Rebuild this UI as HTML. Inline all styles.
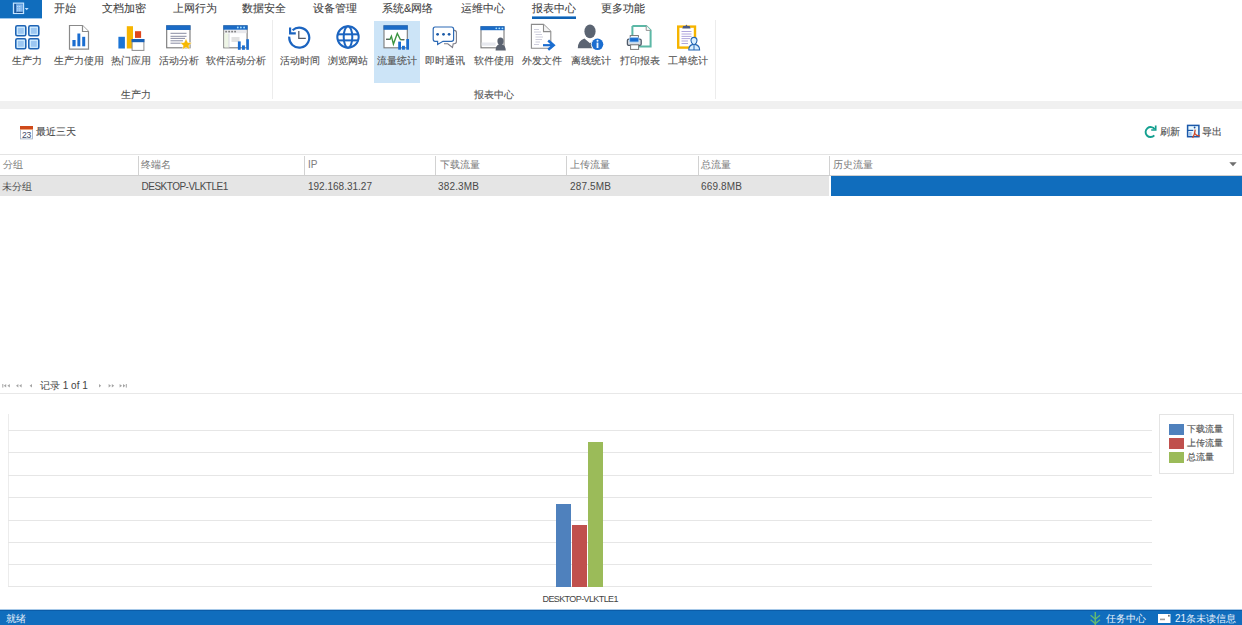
<!DOCTYPE html>
<html><head><meta charset="utf-8">
<style>
*{margin:0;padding:0;box-sizing:border-box}
html,body{width:1242px;height:625px;overflow:hidden;background:#fff;font-family:"Liberation Sans",sans-serif;color:#444}
.a{position:absolute;white-space:nowrap}
.tab{position:absolute;top:0;font-size:11px;line-height:17px;color:#444;-webkit-text-stroke:0.1px #444}
.lbl{position:absolute;top:52.5px;font-size:10px;line-height:16px;color:#555;-webkit-text-stroke:0.12px #555;text-align:center;width:80px;margin-left:-40px}
.ico{position:absolute;top:25px;width:26px;height:26px;margin-left:-13px}
.hd{position:absolute;top:156px;font-size:10px;line-height:17px;color:#808080;-webkit-text-stroke:0.05px #808080}
.cell{position:absolute;top:177px;font-size:10px;line-height:17px;color:#4a4a4a;letter-spacing:0.15px}
.vd{position:absolute;top:156px;width:1px;height:19px;background:#d2d2d2}
.gl{position:absolute;left:8px;width:1144px;height:1px;background:#e6e6e6}
</style></head><body>

<!-- file button -->
<div class="a" style="left:0;top:0;width:42px;height:18px;background:#106dbd"></div><div class="a" style="left:0;top:18px;width:42px;height:1px;background:#9cc6ec"></div>

<!-- tabs -->
<div class="tab" style="left:54px">开始</div>
<div class="tab" style="left:102px">文档加密</div>
<div class="tab" style="left:173px">上网行为</div>
<div class="tab" style="left:242px">数据安全</div>
<div class="tab" style="left:313px">设备管理</div>
<div class="tab" style="left:382px">系统&amp;网络</div>
<div class="tab" style="left:461px">运维中心</div>
<div class="tab" style="left:532px">报表中心</div>
<div class="tab" style="left:601px">更多功能</div>
<div class="a" style="left:532px;top:16px;width:44px;height:3px;background:linear-gradient(#6aa4dc 0,#6aa4dc 1px,#0f62b4 1px)"></div>

<!-- ribbon -->
<div class="a" style="left:374px;top:21px;width:46px;height:62px;background:#cce4f7"></div>
<div class="a" style="left:272px;top:20px;width:1px;height:79px;background:#ececec"></div>
<div class="a" style="left:715px;top:20px;width:1px;height:79px;background:#ececec"></div>

<div class="lbl" style="left:27px">生产力</div>
<div class="lbl" style="left:79px">生产力使用</div>
<div class="lbl" style="left:130.5px">热门应用</div>
<div class="lbl" style="left:179px">活动分析</div>
<div class="lbl" style="left:236px">软件活动分析</div>
<div class="lbl" style="left:299.5px">活动时间</div>
<div class="lbl" style="left:348px">浏览网站</div>
<div class="lbl" style="left:396.5px">流量统计</div>
<div class="lbl" style="left:445px">即时通讯</div>
<div class="lbl" style="left:493.5px">软件使用</div>
<div class="lbl" style="left:542px">外发文件</div>
<div class="lbl" style="left:590.5px">离线统计</div>
<div class="lbl" style="left:639.5px">打印报表</div>
<div class="lbl" style="left:687.5px">工单统计</div>

<div class="lbl" style="left:135.5px;top:87px">生产力</div>
<div class="lbl" style="left:493.5px;top:87px">报表中心</div>

<div class="a" style="left:0;top:101px;width:1242px;height:8px;background:#f0f0f0"></div>

<!-- toolbar -->
<div class="a" style="left:36px;top:124px;font-size:10px;line-height:16px;color:#4a4a4a;-webkit-text-stroke:0.1px #4a4a4a">最近三天</div>
<div class="a" style="left:1160px;top:124px;font-size:10px;line-height:16px;color:#4a4a4a;-webkit-text-stroke:0.1px #4a4a4a">刷新</div>
<div class="a" style="left:1202px;top:124px;font-size:10px;line-height:16px;color:#4a4a4a;-webkit-text-stroke:0.1px #4a4a4a">导出</div>

<!-- table -->
<div class="a" style="left:0;top:154px;width:1242px;height:1px;background:#e4e4e4"></div>
<div class="a" style="left:0;top:175px;width:1242px;height:1px;background:#cfcfcf"></div>
<div class="a" style="left:0;top:176px;width:829px;height:20px;background:#e5e5e5"></div>
<div class="a" style="left:831px;top:176px;width:411px;height:20px;background:#106dbd"></div>
<div class="vd" style="left:138px"></div>
<div class="vd" style="left:304px"></div>
<div class="vd" style="left:435px"></div>
<div class="vd" style="left:566px"></div>
<div class="vd" style="left:698px"></div>
<div class="vd" style="left:829px"></div>
<div class="hd" style="left:3px">分组</div>
<div class="hd" style="left:141px">终端名</div>
<div class="hd" style="left:308px">IP</div>
<div class="hd" style="left:439.5px">下载流量</div>
<div class="hd" style="left:570px">上传流量</div>
<div class="hd" style="left:701px">总流量</div>
<div class="hd" style="left:833px">历史流量</div>
<div class="cell" style="top:177.7px;left:2px">未分组</div>
<div class="cell" style="top:177.7px;left:141.5px;letter-spacing:-0.5px">DESKTOP-VLKTLE1</div>
<div class="cell" style="top:177.7px;left:308px;letter-spacing:0">192.168.31.27</div>
<div class="cell" style="top:177.7px;left:438px">382.3MB</div>
<div class="cell" style="top:177.7px;left:570px">287.5MB</div>
<div class="cell" style="top:177.7px;left:701px">669.8MB</div>

<!-- pager -->
<div class="a" style="left:40px;top:378px;font-size:10px;line-height:15px;color:#444">记录 1 of 1</div>
<div class="a" style="left:0;top:393px;width:1242px;height:1px;background:#e8e8e8"></div>

<!-- chart -->
<div class="a" style="left:8px;top:414px;width:1px;height:173px;background:#ececec"></div>
<div class="gl" style="top:430px"></div>
<div class="gl" style="top:452px"></div>
<div class="gl" style="top:475px"></div>
<div class="gl" style="top:497px"></div>
<div class="gl" style="top:520px"></div>
<div class="gl" style="top:542px"></div>
<div class="gl" style="top:564px"></div>
<div class="gl" style="top:586px"></div>
<div class="a" style="left:556px;top:504px;width:15px;height:83px;background:#4f81bd"></div>
<div class="a" style="left:572px;top:525px;width:15px;height:62px;background:#c0504d"></div>
<div class="a" style="left:588px;top:442px;width:15px;height:145px;background:#9bbb59"></div>
<div class="a" style="left:542.5px;top:593px;font-size:9px;line-height:13px;color:#444;letter-spacing:-0.6px">DESKTOP-VLKTLE1</div>

<!-- legend -->
<div class="a" style="left:1159px;top:414px;width:75px;height:60px;border:1px solid #e4e4e4"></div>
<div class="a" style="left:1169px;top:424px;width:15px;height:11px;background:#4f81bd"></div>
<div class="a" style="left:1169px;top:438px;width:15px;height:11px;background:#c0504d"></div>
<div class="a" style="left:1169px;top:452px;width:15px;height:11px;background:#9bbb59"></div>
<div class="a" style="left:1187px;top:422px;font-size:9px;line-height:14px;color:#555;-webkit-text-stroke:0.15px #555">下载流量<br>上传流量<br>总流量</div>

<!-- status bar -->
<div class="a" style="left:0;top:609px;width:1242px;height:1px;background:#a6c8e8"></div><div class="a" style="left:0;top:610px;width:1242px;height:15px;background:#106dbd;border-top:1px solid #0b5ca8"></div>
<div class="a" style="left:6px;top:612px;font-size:10px;line-height:14px;color:#eaf3fc">就绪</div>
<div class="a" style="left:1106px;top:612px;font-size:10px;line-height:14px;color:#eaf3fc">任务中心</div>
<div class="a" style="left:1175px;top:612px;font-size:10px;line-height:14px;color:#eaf3fc">21条未读信息</div>

<!-- file button icon -->
<svg class="a" style="left:0;top:0" width="42" height="18" viewBox="0 0 42 18">
<rect x="13.4" y="3.1" width="10.2" height="10.4" fill="#4d8fd6" stroke="#c8e6ff" stroke-width="1.1"/>
<rect x="14.6" y="4" width="1.1" height="9" fill="#0b3f80"/>
<rect x="16.4" y="4.6" width="6.2" height="7.6" fill="#7fb6ec"/>
<g fill="#c6e2ff"><rect x="17.2" y="6" width="1" height="1"/><rect x="19.2" y="6" width="1" height="1"/><rect x="17.2" y="8.4" width="1" height="1"/><rect x="19.2" y="8.4" width="1" height="1"/><rect x="17.2" y="10.4" width="1" height="1"/><rect x="19.2" y="10.4" width="1" height="1"/></g>
<rect x="16.4" y="11.8" width="6.2" height="1" fill="#0b3f80"/>
<path d="M24.7 7.9 H28.7 L26.7 10.3Z" fill="#c0e0ff"/>
</svg>

<!-- 1 生产力 -->
<svg class="a" style="left:14px;top:24px" width="27" height="27" viewBox="0 0 27 27">
<g fill="#9cc7f2" stroke="#1f64b4" stroke-width="1.6">
<rect x="1.8" y="1.8" width="10" height="10" rx="1.5"/>
<rect x="14.8" y="1.8" width="10" height="10" rx="1.5"/>
<rect x="1.8" y="14.8" width="10" height="10" rx="1.5"/>
<rect x="14.8" y="14.8" width="10" height="10" rx="1.5"/>
</g>
<g fill="none" stroke="#d8f0ff" stroke-width="1">
<rect x="3.3" y="3.3" width="7" height="7"/>
<rect x="16.3" y="3.3" width="7" height="7"/>
<rect x="3.3" y="16.3" width="7" height="7"/>
<rect x="16.3" y="16.3" width="7" height="7"/>
</g>
</svg>

<!-- 2 生产力使用 -->
<svg class="a" style="left:68px;top:24px" width="22" height="27" viewBox="0 0 22 27">
<path d="M1.5 1.5 H14.5 L20.5 7.5 V25.2 H1.5 Z" fill="#fff" stroke="#8a8a8a" stroke-width="1.2"/>
<path d="M14.5 1.5 V7.5 H20.5" fill="#fff" stroke="#8a8a8a" stroke-width="1.2"/>
<g fill="#1a6dd0">
<rect x="4.4" y="16" width="3.2" height="6.3"/>
<rect x="9.4" y="9.5" width="2.9" height="12.8"/>
<rect x="14.2" y="12.8" width="3" height="9.5"/>
</g>
</svg>

<!-- 3 热门应用 -->
<svg class="a" style="left:117px;top:25px" width="28" height="26" viewBox="0 0 28 26">
<rect x="1.4" y="11.8" width="6.5" height="11.7" fill="#1b74d6"/>
<rect x="9.8" y="1.2" width="6.2" height="22.3" fill="#f7b500"/>
<rect x="18" y="6.2" width="6.1" height="6.7" fill="#e0461c"/>
<rect x="15.1" y="14.5" width="11.8" height="10.9" fill="#fff" stroke="#8c8c8c" stroke-width="1"/>
<rect x="14.6" y="14" width="12.8" height="3.2" fill="#1862b8"/>
</svg>

<!-- 4 活动分析 -->
<svg class="a" style="left:165px;top:24px" width="28" height="28" viewBox="0 0 28 28">
<rect x="1.7" y="1.8" width="23.3" height="22" fill="#fff" stroke="#777" stroke-width="1.1"/>
<rect x="1.2" y="1.3" width="24.3" height="4.7" fill="#1b6bc6"/>
<g stroke="#7a7f99" stroke-width="0.9">
<line x1="5.5" y1="9.3" x2="21.5" y2="9.3"/>
<line x1="5.5" y1="12.3" x2="21.5" y2="12.3"/>
<line x1="5.5" y1="14.4" x2="20" y2="14.4"/>
<line x1="5.5" y1="16.8" x2="18" y2="16.8"/>
<line x1="5.5" y1="19.2" x2="17" y2="19.2"/>
</g>
<path d="M21 14.6 L22.8 18.4 L26.8 18.8 L23.8 21.6 L24.7 25.6 L21 23.4 L17.3 25.6 L18.2 21.6 L15.2 18.8 L19.2 18.4Z" fill="#f6b800" stroke="#fff" stroke-width="0.5"/>
</svg>

<!-- 5 软件活动分析 -->
<svg class="a" style="left:222px;top:24px" width="28" height="28" viewBox="0 0 28 28">
<rect x="1.8" y="1.8" width="23.3" height="22" fill="#fff" stroke="#7a7a7a" stroke-width="1.1"/>
<rect x="1.3" y="1.3" width="24.3" height="4.4" fill="#1b6bc6"/>
<circle cx="15.8" cy="3.5" r="0.9" fill="#a9e2ff"/>
<circle cx="18.9" cy="3.5" r="0.9" fill="#a9e2ff"/>
<circle cx="22.1" cy="3.5" r="0.9" fill="#a9e2ff"/>
<rect x="2.3" y="6.2" width="22.3" height="3" fill="#e8e8ec"/>
<g fill="#777">
<rect x="3.3" y="6.8" width="1.6" height="1.6"/><rect x="6.3" y="6.8" width="1.6" height="1.6"/><rect x="9.3" y="6.8" width="1.6" height="1.6"/><rect x="12.3" y="6.8" width="1.6" height="1.6"/>
</g>
<rect x="2.3" y="9.5" width="4.5" height="14" fill="#eef5e6"/>
<line x1="7" y1="9.5" x2="7" y2="23.5" stroke="#c9c9d6" stroke-width="0.8"/>
<rect x="9.5" y="13" width="8" height="5" fill="#e2e2e2"/>
<rect x="15.9" y="17.4" width="2.8" height="8.4" fill="#1a6dd0"/>
<rect x="20" y="21.4" width="2.9" height="4.4" fill="#1a6dd0"/>
<rect x="24.3" y="15.2" width="2.6" height="10.6" fill="#1a6dd0"/>
</svg>

<!-- 6 活动时间 -->
<svg class="a" style="left:287px;top:26px" width="26" height="25" viewBox="0 0 26 25">
<path d="M2.3 10.6 A10 10 0 1 0 5.6 4.2" fill="none" stroke="#1b64c0" stroke-width="2.2"/>
<path d="M3.1 1.4 V7.4 H8.8" fill="none" stroke="#1b64c0" stroke-width="2.2"/>
<path d="M11.8 5 V12.3 H18.8" fill="none" stroke="#555a66" stroke-width="1.3"/>
</svg>

<!-- 7 浏览网站 -->
<svg class="a" style="left:335px;top:24px" width="26" height="26" viewBox="0 0 26 26">
<g fill="none" stroke="#1b64c0" stroke-width="2">
<circle cx="13" cy="13" r="10.7"/>
<ellipse cx="13" cy="13" rx="4.3" ry="10.7"/>
<line x1="2.5" y1="10.3" x2="23.5" y2="10.3"/>
<line x1="2.5" y1="16.4" x2="23.5" y2="16.4"/>
</g>
</svg>

<!-- 8 流量统计 -->
<svg class="a" style="left:382px;top:24px" width="28" height="28" viewBox="0 0 28 28">
<rect x="2" y="1.8" width="23.3" height="22" fill="#fff" stroke="#7a7a7a" stroke-width="1.1"/>
<rect x="1.5" y="1.3" width="24.3" height="4.5" fill="#1b6bc6"/>
<path d="M4.1 15.3 H8 L9.4 12.2 L11.4 20.1 L15.3 9.4 L18.4 15.6 H22.3" fill="none" stroke="#3a9440" stroke-width="1.35"/><path d="M4.1 15.3 H7.2 M19.2 15.6 H22.3" stroke="#5a6060" stroke-width="1.35"/>
<rect x="16.2" y="17.6" width="2.8" height="8.1" fill="#1a6dd0"/>
<rect x="20" y="21.8" width="2.9" height="3.9" fill="#1a6dd0"/>
<rect x="24.3" y="15" width="2.7" height="10.7" fill="#1a6dd0"/>
</svg>

<!-- 9 即时通讯 -->
<svg class="a" style="left:431px;top:25px" width="28" height="25" viewBox="0 0 28 25">
<path d="M8 5.4 H23.2 Q25.4 5.4 25.4 7.6 V16.6 Q25.4 18.8 23.2 18.8 H22.2 L21.5 22.5 L16.8 18.8 H13" fill="none" stroke="#7d7d88" stroke-width="1.1"/>
<path d="M4 2 H20.5 Q22.6 2 22.6 4.2 V14.3 Q22.6 16.3 20.5 16.3 H12 L6.6 19.5 V16.3 H4 Q2.2 16.3 2.2 14.3 V4.2 Q2.2 2 4 2Z" fill="#fff" stroke="#2d6ab5" stroke-width="1.2"/>
<circle cx="6.6" cy="9.3" r="1.4" fill="#1a5aa8"/>
<circle cx="12.5" cy="9.3" r="1.4" fill="#1a5aa8"/>
<circle cx="18.1" cy="9.3" r="1.4" fill="#1a5aa8"/>
</svg>

<!-- 10 软件使用 -->
<svg class="a" style="left:479px;top:25px" width="28" height="26" viewBox="0 0 28 26">
<rect x="2" y="1.8" width="23" height="21" fill="#fff" stroke="#7a7a7a" stroke-width="1.1"/>
<rect x="1.5" y="1.2" width="24" height="4" fill="#1b6bc6"/>
<circle cx="17.3" cy="3.3" r="0.9" fill="#a9e2ff"/>
<circle cx="20.3" cy="3.3" r="0.9" fill="#a9e2ff"/>
<circle cx="23.4" cy="3.3" r="0.9" fill="#a9e2ff"/>
<rect x="2.6" y="17.5" width="14" height="3.2" fill="#e6e8ee"/>
<path d="M16.6 25.4 Q16.6 20.6 19.8 19.6 Q18.4 18.4 18.4 16.2 Q18.4 12.6 21.5 12.6 Q24.6 12.6 24.6 16.2 Q24.6 18.4 23.2 19.6 Q26.6 20.6 26.8 25.4Z" fill="#5a6270"/>
</svg>

<!-- 11 外发文件 -->
<svg class="a" style="left:530px;top:23px" width="27" height="28" viewBox="0 0 27 28">
<path d="M1.4 1.4 H13.5 L20.8 8.6 V25.3 H1.4Z" fill="#fff" stroke="#8c8c8c" stroke-width="1.1"/>
<path d="M13.5 1.4 V8.6 H20.8" fill="#f4f4f4" stroke="#8c8c8c" stroke-width="1.1"/>
<g stroke="#c8c8d8" stroke-width="0.9">
<line x1="4" y1="6.5" x2="9" y2="6.5"/><line x1="4" y1="9" x2="11" y2="9"/><line x1="5.5" y1="11.5" x2="12" y2="11.5"/><line x1="5.5" y1="14" x2="13" y2="14"/><line x1="5.5" y1="16.5" x2="12" y2="16.5"/><line x1="5.5" y1="19" x2="10" y2="19"/><line x1="4" y1="21.5" x2="9" y2="21.5"/>
</g>
<path d="M13 22.2 H23.5" stroke="#1a6dd0" stroke-width="2.2"/>
<path d="M18.2 17.6 L23.6 22.2 L18.2 26.8" fill="none" stroke="#1a6dd0" stroke-width="2.6"/>
</svg>

<!-- 12 离线统计 -->
<svg class="a" style="left:577px;top:23px" width="28" height="28" viewBox="0 0 28 28">
<ellipse cx="13" cy="8.4" rx="5.6" ry="6.8" fill="#5b6472"/>
<path d="M0.8 25.2 Q0.8 17.6 7.4 15.4 L13 20.2 L18.6 15.4 Q22.8 16.8 23.8 21 L22 25.2Z" fill="#5b6472"/>
<circle cx="20.5" cy="21.3" r="6.6" fill="#fff"/>
<circle cx="20.5" cy="21.3" r="5.8" fill="#1a6dd0"/>
<rect x="19.6" y="19.6" width="1.8" height="5.4" fill="#eaf6ff"/>
<circle cx="20.5" cy="17.8" r="1" fill="#eaf6ff"/>
</svg>

<!-- 13 打印报表 -->
<svg class="a" style="left:626px;top:24px" width="27" height="27" viewBox="0 0 27 27">
<path d="M6.4 2 H20.2 L24.6 6.4 V22.6 H9" fill="#fff" stroke="#5cb8a6" stroke-width="2"/>
<path d="M20.2 1.5 V6.4 H24.8" fill="#fafafa" stroke="#888" stroke-width="0.9"/>
<path d="M6.4 2 V11.5" stroke="#5cb8a6" stroke-width="2"/>
<rect x="4.2" y="11.6" width="8.2" height="2.6" fill="#fff" stroke="#6a6a6a" stroke-width="0.9"/>
<rect x="1.4" y="15.2" width="13.8" height="6.2" rx="1.4" fill="#d6dde6" stroke="#4f5a68" stroke-width="1.3"/>
<rect x="3.6" y="13.6" width="9.2" height="4.4" rx="0.8" fill="#1a6dd0" stroke="#a8d4fa" stroke-width="0.8"/>
<rect x="4.6" y="20.8" width="8" height="4.6" fill="#fff" stroke="#7a7a7a" stroke-width="1"/>
</svg>

<!-- 14 工单统计 -->
<svg class="a" style="left:676px;top:23px" width="27" height="28" viewBox="0 0 27 28">
<rect x="2.2" y="3.6" width="16.8" height="21" fill="#fff" stroke="#f6b400" stroke-width="2.4"/>
<path d="M6.3 5.4 L7.2 3 H9.4 L10.4 1.4 L11.4 3 H13.6 L14.6 5.4Z" fill="#4b5a82"/>
<g stroke="#9c90d4" stroke-width="0.8">
<line x1="5.5" y1="8.5" x2="15.5" y2="8.5"/><line x1="5.5" y1="11" x2="15.5" y2="11"/><line x1="5.5" y1="13.4" x2="15.5" y2="13.4"/><line x1="5.5" y1="15.6" x2="14" y2="15.6"/><line x1="5.5" y1="18" x2="12" y2="18"/><line x1="5.5" y1="20.5" x2="12" y2="20.5"/>
</g>
<path d="M12.8 27 Q12.8 22.6 16.2 21.6 L17.2 21.4 Q15 20 15 17.6 Q15 14.4 18 14.4 Q21 14.4 21 17.6 Q21 20 18.8 21.4 L19.8 21.6 Q23.6 22.6 23.6 27Z" fill="#d8efff" stroke="#2466b4" stroke-width="1.1"/>
<line x1="18" y1="21.6" x2="18" y2="27" stroke="#2466b4" stroke-width="1"/>
</svg>

<!-- calendar -->
<svg class="a" style="left:19px;top:125px" width="15" height="15" viewBox="0 0 15 15">
<rect x="1.5" y="2.5" width="12" height="11.4" fill="#fdfdff" stroke="#a8b6c8" stroke-width="0.9"/>
<rect x="1" y="1" width="13" height="3.4" fill="#cf4a1a"/>
<rect x="1" y="4" width="13" height="0.8" fill="#f0a070"/>
<text x="7.4" y="12.9" font-family="Liberation Sans" font-size="8.6" text-anchor="middle" fill="#3f4c66" letter-spacing="-0.3">23</text>
</svg>

<!-- refresh -->
<svg class="a" style="left:1143px;top:124px" width="15" height="15" viewBox="0 0 15 15">
<path d="M11.3 11.4 A5 5 0 1 1 11.7 5.2" fill="none" stroke="#14a090" stroke-width="1.9"/>
<path d="M12.7 1.4 V6 H8.2" fill="none" stroke="#14a090" stroke-width="1.7"/>
</svg>

<!-- export -->
<svg class="a" style="left:1186px;top:124px" width="15" height="15" viewBox="0 0 15 15">
<rect x="1.6" y="1.4" width="11.3" height="11.3" fill="#e8f8ff" stroke="#1a58aa" stroke-width="1.5"/>
<path d="M1.6 6.4 H7.2" stroke="#1a58aa" stroke-width="1.2"/>
<rect x="3" y="8" width="2.6" height="3.6" fill="#a8c8f0"/>
<circle cx="8.6" cy="3.5" r="0.9" fill="#1a4a98"/>
<path d="M9.2 5.6 Q9 10 6.6 13.8 M8.8 9.6 Q10.4 12 14 11.8" fill="none" stroke="#d04a2c" stroke-width="1.3"/>
</svg>

<!-- status icons -->
<svg class="a" style="left:1089px;top:610px" width="13" height="15" viewBox="0 0 13 15">
<path d="M6.3 2 V15" stroke="#62b872" stroke-width="1.5"/>
<path d="M1.6 5.2 L6.3 9.2 L11 5.2 M1.6 9.8 L6.3 13.6 L11 9.8" fill="none" stroke="#62b872" stroke-width="1.4"/>
</svg>
<svg class="a" style="left:1158px;top:614px" width="13" height="9" viewBox="0 0 13 9">
<rect x="0" y="0" width="12.5" height="9" fill="#fff"/>
<rect x="2" y="4.6" width="5" height="1.6" fill="#9a9a9a"/>
<rect x="10.3" y="0.8" width="1.2" height="1.8" fill="#333"/>
</svg>

<!-- pager arrows -->
<svg class="a" style="left:0;top:380px" width="130" height="12" viewBox="0 0 130 12">
<g fill="#a4a4a4">
<rect x="2.3" y="4" width="1" height="3.6"/><path d="M6.2 4 V7.6 L3.8 5.8Z"/><path d="M9.8 4 V7.6 L7.4 5.8Z"/>
<path d="M18.4 4 V7.6 L16 5.8Z"/><path d="M21.6 4 V7.6 L19.2 5.8Z"/>
<path d="M32 4 V7.6 L29.6 5.8Z"/>
<path d="M99 4 V7.6 L101.2 5.8Z"/>
<path d="M108.6 4 V7.6 L111 5.8Z"/><path d="M111.8 4 V7.6 L114.2 5.8Z"/>
<path d="M119.6 4 V7.6 L122 5.8Z"/><path d="M123 4 V7.6 L125.4 5.8Z"/><rect x="125.8" y="4" width="1" height="3.6"/>
</g>
</svg>

<!-- dropdown triangle -->
<svg class="a" style="left:1228px;top:161px" width="10" height="7" viewBox="0 0 10 7">
<path d="M1.3 1.3 H8.7 L5 5.3Z" fill="#6e6e6e"/>
</svg>

</body></html>
